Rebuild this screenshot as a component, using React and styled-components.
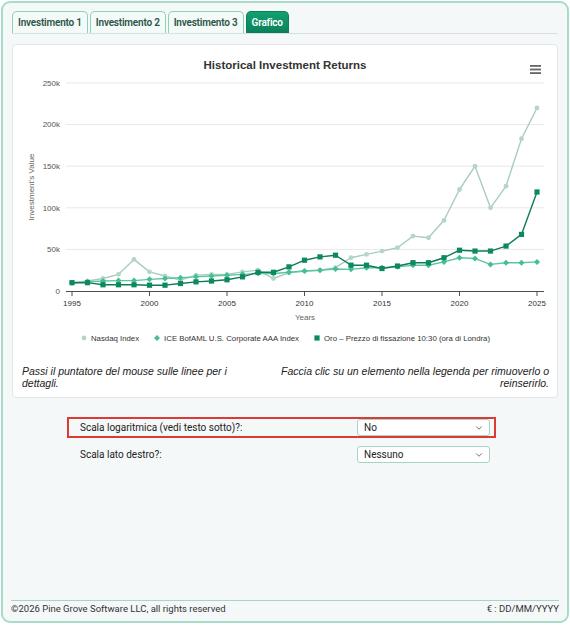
import styled, { createGlobalStyle } from "styled-components";
import { ChevronDown } from "lucide-react";

const GlobalStyle = createGlobalStyle`
  html, body { margin: 0; padding: 0; background: #ffffff; }
  body { font-family: Roboto, "Liberation Sans", sans-serif; color: #333; }
  * { box-sizing: border-box; }
`;

// data in thousands, 1995..2025
const YEARS = Array.from({ length: 31 }, (_, i) => 1995 + i);
const SERIES = [
  {
    name: "Nasdaq Index",
    line: "#a9ccbf",
    fill: "#b3d6c9",
    marker: "circle",
    values: [10, 12, 15, 20, 38, 23, 18, 13, 19, 20, 20, 23, 25, 15, 22, 24, 25, 28, 40, 44, 48, 52, 66, 64, 85, 122, 150, 100, 126, 183, 220],
  },
  {
    name: "ICE BofAML U.S. Corporate AAA Index",
    line: "#5cc8a0",
    fill: "#45be91",
    marker: "diamond",
    values: [10, 11, 12, 12.5, 12.5, 14, 15, 16, 17, 18, 19, 20, 21, 21, 22.5, 24, 25, 26.5, 26, 28, 28, 29, 31, 31, 35, 40, 39, 32, 34, 34, 35],
  },
  {
    name: "Oro – Prezzo di fissazione 10:30 (ora di Londra)",
    line: "#0f7b55",
    fill: "#0b8a5c",
    marker: "square",
    values: [10, 10, 7.5, 7.5, 7.5, 7, 7, 9, 11, 12, 13.5, 17, 22.5, 22.5, 29, 37, 41, 43, 31, 31, 27, 30, 34, 34, 40, 49, 48, 48, 54, 68, 119],
  },
];

const xPos = (year) => 72 + (year - 1995) * 15.5;
const yPos = (k) => 291 - (k / 250) * 208;

function Marker({ type, x, y, fill }) {
  if (type === "circle") return <circle cx={x} cy={y} r="2.4" fill={fill} />;
  if (type === "diamond")
    return <path d={`M${x} ${y - 3}L${x + 3} ${y}L${x} ${y + 3}L${x - 3} ${y}Z`} fill={fill} />;
  return <rect x={x - 2.6} y={y - 2.6} width="5.2" height="5.2" fill={fill} />;
}

function Chart() {
  const ticks = [0, 50, 100, 150, 200, 250];
  const labels = [1995, 2000, 2005, 2010, 2015, 2020, 2025];
  return (
    <PlotSvg viewBox="13 78 544 247" width="544" height="247">
      {ticks.slice(1).map((t) => (
        <line key={t} x1="66" x2="544" y1={yPos(t)} y2={yPos(t)} stroke="#e8e8e8" strokeWidth="1" />
      ))}
      {ticks.map((t) => (
        <text key={t} x="60" y={yPos(t)} dy="0.35em" textAnchor="end" fontSize="8" fill="#555">
          {t === 0 ? "0" : `${t}k`}
        </text>
      ))}
      <text
        x="34"
        y="187"
        transform="rotate(-90 34 187)"
        textAnchor="middle"
        fontSize="8"
        fill="#666"
      >
        Investment's Value
      </text>
      <line x1="66" x2="544" y1="291.5" y2="291.5" stroke="#4d4d4d" strokeWidth="1" />
      {labels.map((y) => (
        <g key={y}>
          <line x1={xPos(y)} x2={xPos(y)} y1="291.5" y2="296" stroke="#4d4d4d" strokeWidth="1" />
          <text x={xPos(y)} y="303" dy="0.35em" textAnchor="middle" fontSize="8" fill="#333">
            {y}
          </text>
        </g>
      ))}
      <text x="305" y="317" dy="0.35em" textAnchor="middle" fontSize="8" fill="#666">
        Years
      </text>
      {SERIES.map((s) => (
        <g key={s.name}>
          <polyline
            points={s.values.map((v, i) => `${xPos(YEARS[i])},${yPos(v)}`).join(" ")}
            fill="none"
            stroke={s.line}
            strokeWidth="1.4"
            strokeLinejoin="round"
          />
          {s.values.map((v, i) => (
            <Marker key={i} type={s.marker} x={xPos(YEARS[i])} y={yPos(v)} fill={s.fill} />
          ))}
        </g>
      ))}
    </PlotSvg>
  );
}

export default function App() {
  const tabs = ["Investimento 1", "Investimento 2", "Investimento 3", "Grafico"];
  return (
    <>
      <GlobalStyle />
      <Frame>
        <TabBar>
          {tabs.map((t) => (
            <Tab key={t} $active={t === "Grafico"}>
              {t}
            </Tab>
          ))}
        </TabBar>

        <Card>
          <ChartHeader>
            <span />
            <Title>Historical Investment Returns</Title>
            <MenuButton aria-label="menu">
              <svg width="11" height="9" viewBox="0 0 11 9">
                <rect x="0" y="0" width="11" height="1.8" fill="#666" />
                <rect x="0" y="3.6" width="11" height="1.8" fill="#666" />
                <rect x="0" y="7.2" width="11" height="1.8" fill="#666" />
              </svg>
            </MenuButton>
          </ChartHeader>
          <Chart />
          <Legend>
            {SERIES.map((s) => (
              <LegendItem key={s.name}>
                <svg width="8" height="8" viewBox="0 0 8 8">
                  <Marker type={s.marker} x={4} y={4} fill={s.fill} />
                </svg>
                {s.name}
              </LegendItem>
            ))}
          </Legend>
          <Notes>
            <Note>Passi il puntatore del mouse sulle linee per i dettagli.</Note>
            <Note $right>Faccia clic su un elemento nella legenda per rimuoverlo o reinserirlo.</Note>
          </Notes>
        </Card>

        <Options>
          <OptionRow $highlight>
            <OptionLabel>Scala logaritmica (vedi testo sotto)?:</OptionLabel>
            <Select>
              No
              <ChevronDown size={10} strokeWidth={2} color="#555" />
            </Select>
          </OptionRow>
          <OptionRow>
            <OptionLabel>Scala lato destro?:</OptionLabel>
            <Select>
              Nessuno
              <ChevronDown size={10} strokeWidth={2} color="#555" />
            </Select>
          </OptionRow>
        </Options>

        <Footer>
          <span>©2026 Pine Grove Software LLC, all rights reserved</span>
          <span>€ : DD/MM/YYYY</span>
        </Footer>
      </Frame>
    </>
  );
}

const Frame = styled.div`
  margin: 1px;
  width: 568px;
  height: 622px;
  border: 2px solid #a8dcc9;
  border-radius: 9px;
  background: #f5f8f9;
  padding: 8px 9px 0 9px;
  display: flex;
  flex-direction: column;
`;

const TabBar = styled.div`
  display: flex;
  align-items: flex-end;
  gap: 2px;
  height: 23px;
  border-bottom: 1px solid #dcdfe1;
`;

const Tab = styled.div`
  height: 22px;
  padding: 0 5px;
  display: flex;
  align-items: center;
  border: 1px solid ${(p) => (p.$active ? "#0b7f57" : "#8fd0b8")};
  border-bottom: none;
  border-radius: 5px 5px 0 0;
  background: ${(p) => (p.$active ? "linear-gradient(#13a171, #0a7f58)" : "#f3faf8")};
  color: ${(p) => (p.$active ? "#ffffff" : "#2c5348")};
  font-size: 10px;
  font-weight: 600;
  letter-spacing: -0.2px;
  white-space: nowrap;
`;

const Card = styled.div`
  margin-top: 10px;
  height: 354px;
  background: #ffffff;
  border: 1px solid #e2e6e8;
  border-radius: 4px;
  display: flex;
  flex-direction: column;
`;

const ChartHeader = styled.div`
  height: 33px;
  display: grid;
  grid-template-columns: 1fr auto 1fr;
  align-items: start;
`;

const Title = styled.div`
  margin-top: 13px;
  font-family: "Liberation Sans", Arial, sans-serif;
  font-size: 11.5px;
  font-weight: 700;
  line-height: 14px;
  color: #333;
`;

const MenuButton = styled.div`
  justify-self: end;
  margin: 20px 16px 0 0;
  display: flex;
`;

const PlotSvg = styled.svg`
  display: block;
  font-family: "Liberation Sans", Arial, sans-serif;
`;

const Legend = styled.div`
  margin-top: 7px;
  height: 12px;
  display: flex;
  justify-content: center;
  align-items: center;
  gap: 14px;
  font-family: "Liberation Sans", Arial, sans-serif;
  font-size: 7.8px;
  color: #333;
`;

const LegendItem = styled.div`
  display: flex;
  align-items: center;
  gap: 3px;
`;

const Notes = styled.div`
  margin-top: 21px;
  padding: 0 8px 0 9px;
  display: grid;
  grid-template-columns: 230px 1fr;
  gap: 10px;
`;

const Note = styled.p`
  margin: 0;
  font-family: "Liberation Sans", Arial, sans-serif;
  font-style: italic;
  font-size: 10.5px;
  line-height: 12px;
  color: #222;
  text-align: ${(p) => (p.$right ? "right" : "left")};
`;

const Options = styled.div`
  flex: 1;
  padding: 19px 0 0 55px;
  display: flex;
  flex-direction: column;
  gap: 6px;
`;

const OptionRow = styled.div`
  width: 429px;
  height: 21px;
  padding: 0 4px 0 11px;
  display: flex;
  align-items: center;
  justify-content: space-between;
  border: 2px solid ${(p) => (p.$highlight ? "#dc3a34" : "transparent")};
`;

const OptionLabel = styled.span`
  font-size: 10px;
  color: #222;
`;

const Select = styled.div`
  width: 133px;
  height: 17px;
  padding: 0 5px 0 6px;
  display: flex;
  align-items: center;
  justify-content: space-between;
  background: #ffffff;
  border: 1px solid #a6d5c4;
  border-radius: 3px;
  font-size: 10px;
  color: #222;
`;

const Footer = styled.div`
  height: 21px;
  padding-top: 2px;
  border-top: 1px solid #a9d3c4;
  display: flex;
  justify-content: space-between;
  font-size: 9.5px;
  line-height: 12px;
  color: #333;
  margin: 0 -1px;
`;
